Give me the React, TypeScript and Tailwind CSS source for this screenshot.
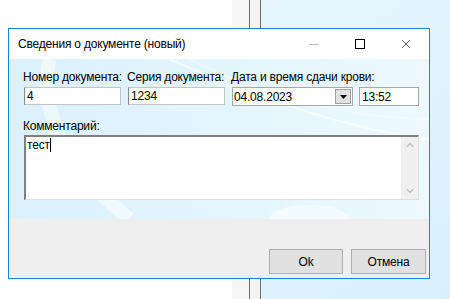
import { ChevronUp, ChevronDown, X } from "lucide-react"

const font = { fontFamily: '"Liberation Sans", Arial, sans-serif' }

function Field({ value }: { value: string }) {
  return (
    <div className="w-full h-[18px] bg-white border border-[#c4c4c4] border-l-[#8a8a8a] flex items-center pl-[2px] text-[12px] text-black leading-none">
      {value}
    </div>
  )
}

function DateCombo() {
  return (
    <div className="w-[121px] h-[19px] bg-white border border-[#a8a8a8] flex items-center justify-between">
      <span className="text-[12px] leading-none pl-[1px] text-black">04.08.2023</span>
      <div className="w-[16px] h-[15px] mr-[1px] bg-[#e1e1e1] border border-[#a0a0a0] flex items-center justify-center">
        <svg width="7" height="4" viewBox="0 0 7 4">
          <path d="M0 0h7L3.5 4z" fill="#000" />
        </svg>
      </div>
    </div>
  )
}

function Label({ children }: { children: string }) {
  return <div className="text-[12px] leading-[15px] text-black whitespace-nowrap -ml-[1px]">{children}</div>
}

export default function App() {
  return (
    <div style={font} className="relative w-[450px] h-[299px] overflow-hidden tracking-[-0.2px] bg-gradient-to-br from-[#eef9fe] via-[#e2f4fd] to-[#d9f0fb]">
      {/* background window behind the dialog */}
      <div className="absolute left-0 top-0 w-[232px] h-[299px] bg-white" />
      <div className="absolute left-[232px] top-0 w-[17px] h-[299px] bg-[#f7f7f7]" />
      <div className="absolute left-[249px] top-0 w-px h-[299px] bg-[#6d6d6d]" />
      <div className="absolute left-[250px] top-0 w-[10px] h-[299px] bg-[#f4f4f4]" />
      <div className="absolute left-[260px] top-0 w-px h-[299px] bg-[#6d6d6d]" />

      {/* dialog */}
      <div className="absolute left-[8px] top-[28px] w-[422px] h-[251px] border border-[#1883d7] bg-white flex flex-col">
        <div className="h-[30px] flex items-center justify-between bg-white">
          <span className="pl-[9px] text-[12px] text-black">Сведения о документе (новый)</span>
          <div className="flex items-center h-full">
            <div className="w-[46px] h-full flex items-center justify-center">
              <div className="w-[10px] h-px bg-[#bdbdbd]" />
            </div>
            <div className="w-[46px] h-full flex items-center justify-center">
              <div className="w-[10px] h-[10px] border border-black" />
            </div>
            <div className="w-[46px] h-full flex items-center justify-center">
              <X size={14} strokeWidth={1.1} color="#000" />
            </div>
          </div>
        </div>

        <div className="relative h-[160px] overflow-hidden bg-gradient-to-r from-[#dbf1fd] via-[#e4f5fe] to-[#edf9ff] pt-[11px] pl-[15px]">
          <svg className="absolute inset-0" width="420" height="160" viewBox="0 0 420 160">
            <path d="M40 0 C 30 60, 60 110, 120 160" stroke="#ffffff" strokeOpacity="0.5" strokeWidth="14" fill="none" />
            <path d="M160 0 C 230 30, 330 70, 420 80" stroke="#ffffff" strokeOpacity="0.55" strokeWidth="2" fill="none" />
            <path d="M180 0 C 250 35, 340 60, 420 60" stroke="#ffffff" strokeOpacity="0.4" strokeWidth="1.5" fill="none" />
            <ellipse cx="300" cy="160" rx="40" ry="14" fill="#ffffff" fillOpacity="0.5" />
          </svg>

          <div className="relative flex gap-[7px]">
            <div className="w-[97px] flex flex-col gap-[2px]">
              <Label>Номер документа:</Label>
              <Field value="4" />
            </div>
            <div className="w-[97px] flex flex-col gap-[2px]">
              <Label>Серия документа:</Label>
              <Field value="1234" />
            </div>
            <div className="flex flex-col gap-[2px]">
              <Label>Дата и время сдачи крови:</Label>
              <div className="flex gap-[6px]">
                <DateCombo />
                <div className="w-[60px] h-[19px] bg-white border border-[#a8a8a8] flex items-center pl-[2px]">
                  <span className="text-[12px] leading-none text-black">13:52</span>
                </div>
              </div>
            </div>
          </div>

          <div className="relative mt-[13px] flex flex-col gap-[1px]">
            <Label>Комментарий:</Label>
            <div className="w-[395px] h-[65px] bg-white border-t-2 border-l-2 border-t-[#7f7f7f] border-l-[#7f7f7f] border-b border-r border-b-[#e0e0e0] border-r-[#e0e0e0] flex">
              <div className="flex-1 pl-[1px] pt-[1px] text-[12px] leading-[14px] text-black flex items-start">
                <span>тест</span>
                <span className="w-px h-[14px] bg-black" />
              </div>
              <div className="w-[17px] bg-[#f0f0f0] flex flex-col items-center justify-between py-[2px]">
                <ChevronUp size={12} strokeWidth={2.5} color="#bfbfbf" />
                <ChevronDown size={12} strokeWidth={2.5} color="#bfbfbf" />
              </div>
            </div>
          </div>
        </div>

        <div className="flex-1 bg-[#efefef] flex items-end justify-end gap-[8px] pr-[3px] pb-[4px]">
          <button className="w-[74px] h-[25px] bg-[#e1e1e1] border border-[#adadad] text-[12px] text-black">Ok</button>
          <button className="w-[75px] h-[25px] bg-[#e1e1e1] border border-[#adadad] text-[12px] text-black">Отмена</button>
        </div>
      </div>
    </div>
  )
}
